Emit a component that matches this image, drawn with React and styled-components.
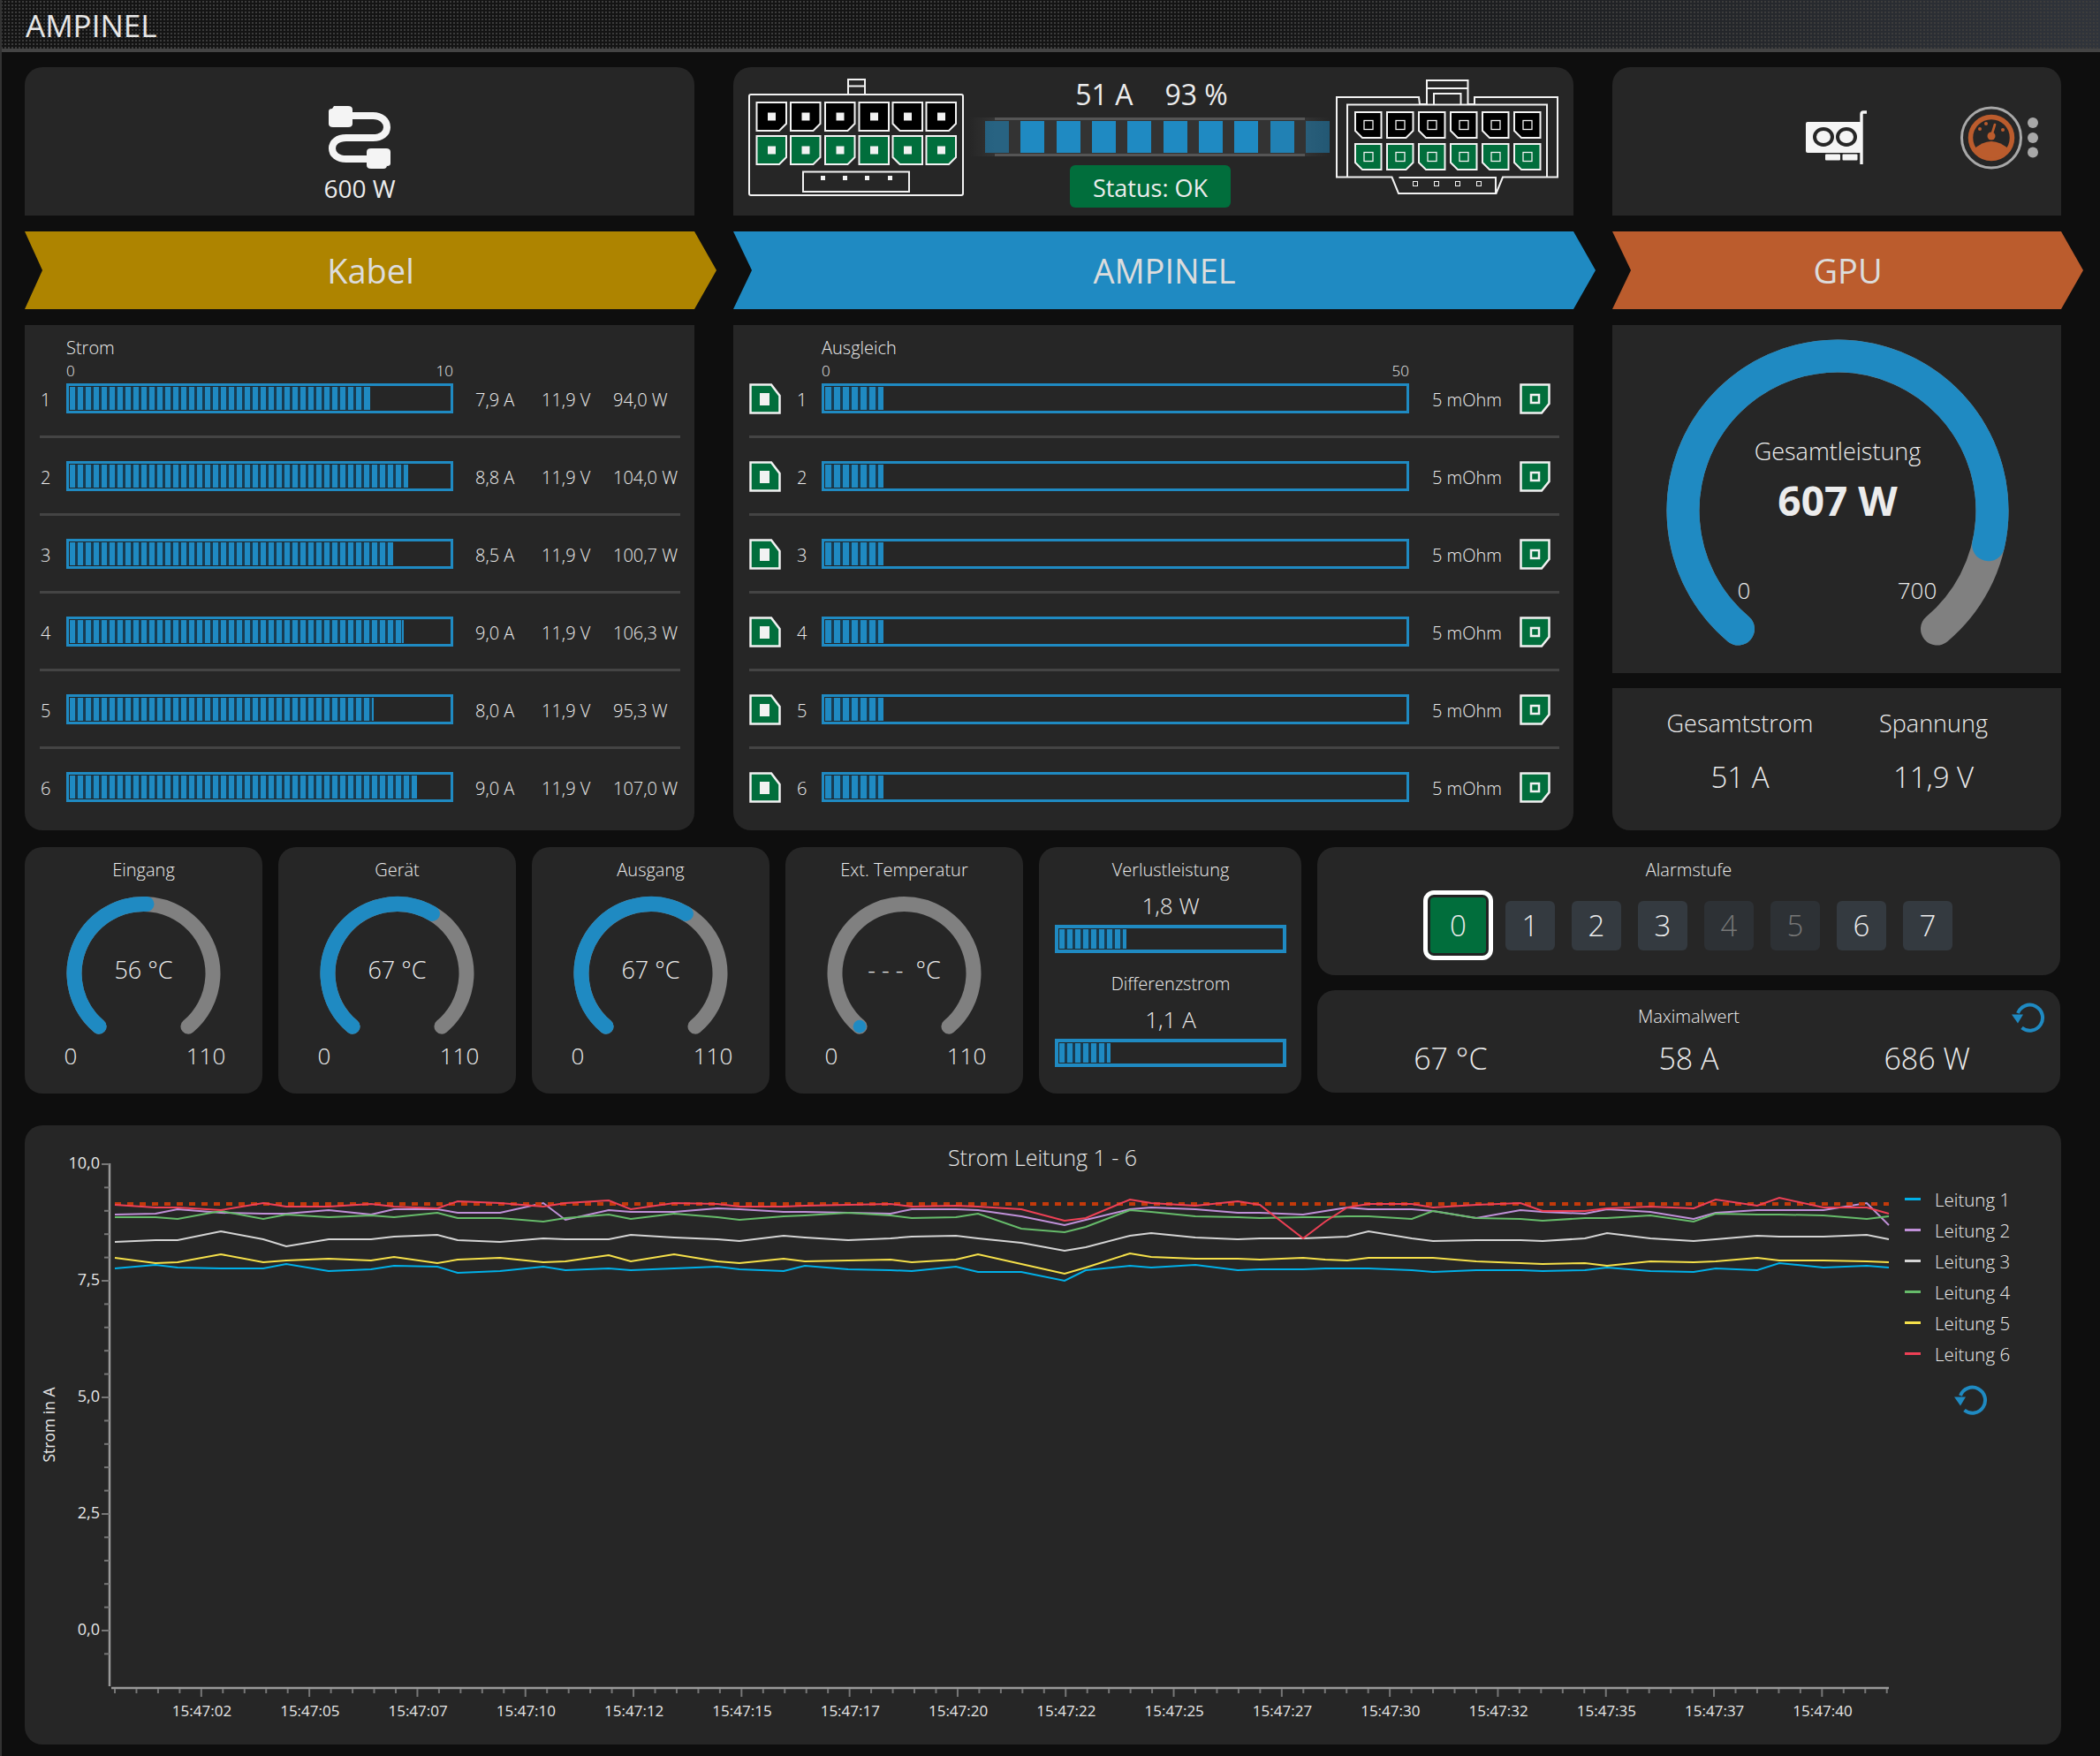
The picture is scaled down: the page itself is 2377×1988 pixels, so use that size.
import React from "react";
import styled, { createGlobalStyle } from "styled-components";

const BLUE = "#1f8ac2";
const GREEN = "#016e3c";
const TRACK = "#808080";

const GlobalStyle = createGlobalStyle`
  html, body {
    margin: 0;
    padding: 0;
    background: #0e0e0e;
    color: #ececec;
    font-family: "Open Sans", "Liberation Sans", sans-serif;
    font-weight: 300;
  }
`;

const Page = styled.div`
  width: 2377px;
  height: 1988px;
  box-sizing: border-box;
  border-left: 2px solid #333;
  overflow: hidden;
`;

const TitleBar = styled.header`
  height: 55px;
  box-sizing: content-box;
  margin-left: -2px;
  padding-left: 29px;
  display: flex;
  align-items: center;
  font-size: 35px;
  line-height: 60px;
  font-weight: 400;
  color: #e6e6e6;
  border-bottom: 4px solid #444;
  background:
    radial-gradient(circle, #3c3c3c 1px, transparent 1.4px) 0 0 / 4px 4px,
    linear-gradient(90deg, #141414 0%, #141414 58%, #30343b 100%);
  span { padding-top: 3px; }
`;

const Main = styled.main`
  padding: 17px 0 0 26px;
`;

const TopGrid = styled.div`
  display: grid;
  grid-template-columns: 758px 951px 508px;
  grid-template-rows: 168px 88px 572px;
  column-gap: 44px;
  row-gap: 18px;
`;

const Panel = styled.section`
  background: #262626;
  box-sizing: border-box;
  border-radius: ${(p) => p.$radius || "0"};
`;

const CableCard = styled(Panel)`
  display: flex;
  flex-direction: column;
  align-items: center;
  padding-top: 44px;
  font-size: 28px;
  font-weight: 400;
  line-height: 38px;
  svg { margin-bottom: 3px; }
`;

const ConnectorCard = styled(Panel)`
  display: flex;
  padding-left: 10px;
  gap: 1px;
  svg { flex: none; }
`;

const FlowColumn = styled.div`
  width: 408px;
  display: flex;
  flex-direction: column;
  align-items: center;
`;

const Readout = styled.div`
  height: 57px;
  padding: 3px 0 0 5px;
  box-sizing: border-box;
  display: flex;
  gap: 36px;
  align-items: center;
  font-size: 32px;
  font-weight: 400;
`;

const FlowTrack = styled.div`
  position: relative;
  width: 408px;
  height: 44px;
  box-sizing: border-box;
  padding-left: 18px;
  display: flex;
  align-items: center;
  gap: 13.4px;
  background: linear-gradient(90deg, transparent 0, #333 7%, #333 93%, transparent 100%);
  &::before {
    content: "";
    position: absolute;
    left: 29px;
    width: 351px;
    top: 0;
    bottom: 0;
    border-top: 3px solid #555;
    border-bottom: 3px solid #555;
  }
`;

const FlowBlock = styled.div`
  width: 27px;
  height: 36px;
  background: ${BLUE};
  opacity: ${(p) => p.$dim};
`;

const StatusBadge = styled.div`
  margin: 10px 0 0 2px;
  width: 182px;
  height: 48px;
  box-sizing: border-box;
  padding-top: 3px;
  border-radius: 6px;
  background: ${GREEN};
  display: flex;
  align-items: center;
  justify-content: center;
  font-size: 27px;
  font-weight: 400;
`;

const GpuCard = styled(Panel)`
  display: flex;
  align-items: center;
  padding: 0 0 9px 219px;
  svg:last-child { margin-left: 105px; }
`;

const Banner = styled.div`
  width: calc(100% + 25px);
  background: ${(p) => p.$color};
  display: flex;
  align-items: center;
  justify-content: center;
  font-size: 38px;
  font-weight: 400;
  color: #dcdcdc;
  clip-path: polygon(
    0 0,
    calc(100% - 25px) 0,
    100% 50%,
    calc(100% - 25px) 100%,
    0 100%,
    ${(p) => p.$notch}px 50%
  );
`;

const RowsPanel = styled(Panel)`
  padding: 14px 16px 0 ${(p) => p.$left}px;
`;

const RowsTitle = styled.div`
  margin-left: ${(p) => p.$indent}px;
  font-size: 20px;
  line-height: 24px;
`;

const ScaleHead = styled.div`
  margin: 4px 0 4px ${(p) => p.$indent}px;
  width: ${(p) => p.$width}px;
  display: flex;
  justify-content: space-between;
  font-size: 17px;
  line-height: 20px;
`;

const Row = styled.div`
  display: flex;
  align-items: center;
  height: 34px;
  font-size: 20px;
  padding-bottom: 25px;
  margin-bottom: 26px;
  border-bottom: 3px solid #444;
  &:last-child { border-bottom: 0; }
`;

const RowNumber = styled.div`
  flex: none;
  width: ${(p) => p.$width}px;
  padding: 2px 0 0 ${(p) => p.$pad}px;
  box-sizing: border-box;
`;

const Value = styled.div`
  flex: none;
  width: ${(p) => p.$width}px;
  margin-left: ${(p) => p.$gap || 0}px;
  padding-top: 2px;
  white-space: nowrap;
`;

const Bar = styled.div`
  flex: none;
  box-sizing: border-box;
  width: ${(p) => p.$width}px;
  height: ${(p) => p.$height || 34}px;
  border: ${(p) => p.$border || 3}px solid ${BLUE};
  padding: 1px;
`;

const BarFill = styled.div`
  height: 100%;
  width: ${(p) => p.$fill * 100}%;
  box-sizing: border-box;
  border-right: 2px solid ${BLUE};
  background: repeating-linear-gradient(
    90deg,
    ${BLUE} 0,
    ${BLUE} ${(p) => p.$pitch - 3}px,
    #183c52 ${(p) => p.$pitch - 3}px,
    #183c52 ${(p) => p.$pitch}px
  );
`;

const GpuColumn = styled.div`
  display: flex;
  flex-direction: column;
  gap: 17px;
`;

const PowerGaugePanel = styled(Panel)`
  position: relative;
  height: 394px;
  svg { display: block; }
`;

const GaugeLabel = styled.div`
  position: absolute;
  left: ${(p) => p.$x}px;
  top: ${(p) => p.$y}px;
  transform: translate(-50%, -50%);
  white-space: nowrap;
  font-size: ${(p) => p.$size}px;
  font-weight: ${(p) => p.$weight || 300};
`;

const TotalsPanel = styled(Panel)`
  height: 161px;
  display: grid;
  grid-template-columns: 72px 145px 74px 145px;
  align-content: start;
  padding-top: 22px;
  text-align: center;
`;

const TotalCol = styled.div`
  grid-column: ${(p) => p.$col};
  justify-self: center;
  white-space: nowrap;
  font-size: 27px;
  line-height: 36px;
  div { margin-top: 25px; font-size: 33px; }
`;

const SecondRow = styled.div`
  margin-top: 19px;
  display: flex;
  gap: 18px;
  height: 279px;
`;

const TempCard = styled(Panel)`
  width: 269px;
  padding-top: 12px;
  border-radius: 20px;
  flex: none;
`;

const CardTitle = styled.div`
  text-align: center;
  font-size: 20px;
  line-height: 28px;
`;

const GaugeBox = styled.div`
  position: relative;
  height: 239px;
  svg { display: block; }
`;

const PowerCard = styled(Panel)`
  width: 297px;
  flex: none;
  border-radius: 20px;
  padding: 12px 17px 0 18px;
`;

const PowerValue = styled.div`
  text-align: center;
  font-size: 26px;
  line-height: 36px;
  margin: 8px 0 4px;
`;

const PowerGap = styled.div`
  height: 21px;
`;

const RightColumn = styled.div`
  width: 841px;
  display: flex;
  flex-direction: column;
  gap: 17px;
`;

const AlarmCard = styled(Panel)`
  height: 145px;
  border-radius: 20px;
  padding-top: 12px;
`;

const AlarmRow = styled.div`
  margin-top: 9px;
  display: flex;
  justify-content: center;
  align-items: center;
  gap: 19px;
  padding-right: 2px;
`;

const AlarmButton = styled.div`
  box-sizing: border-box;
  display: flex;
  align-items: center;
  justify-content: center;
  font-size: 33px;
  border-radius: ${(p) => (p.$active ? 12 : 6)}px;
  width: ${(p) => (p.$active ? 79 : 56)}px;
  height: ${(p) => (p.$active ? 79 : 56)}px;
  margin-right: ${(p) => (p.$active ? -5 : 0)}px;
  color: ${(p) => (p.$off ? "#777" : "#ececec")};
  background: ${(p) => (p.$active ? GREEN : p.$off ? "#2d3135" : "#343a40")};
  border: ${(p) => (p.$active ? "5px solid #fff" : "0")};
  box-shadow: ${(p) => (p.$active ? "inset 0 0 0 3px #222" : "none")};
`;

const MaxCard = styled(Panel)`
  position: relative;
  height: 116px;
  border-radius: 20px;
  padding-top: 16px;
`;

const MaxValues = styled.div`
  margin-top: 11px;
  display: grid;
  grid-template-columns: 1fr 1fr 1fr;
  padding: 0 16px;
  text-align: center;
  font-size: 34px;
  line-height: 44px;
`;

const ResetCorner = styled.div`
  position: absolute;
  right: 17px;
  top: 12px;
`;

const ChartCard = styled(Panel)`
  margin-top: 36px;
  width: 2305px;
  height: 701px;
  border-radius: 20px;
  display: flex;
  svg { flex: none; }
`;

const Legend = styled.div`
  padding: 66px 0 0 3px;
  font-size: 20.5px;
  flex: 1;
`;

const LegendItem = styled.div`
  display: flex;
  align-items: center;
  height: 35px;
  gap: 16px;
  &::before {
    content: "";
    width: 18px;
    height: 3px;
    background: ${(p) => p.$color};
  }
`;

const LegendReset = styled.div`
  margin: 16px 0 0 56px;
`;

const ChartText = styled.text`
  fill: #e6e6e6;
  font-size: ${(p) => p.$size}px;
  font-weight: ${(p) => p.$weight || 300};
`;

// geometry helpers for the gauges
const polar = (cx, cy, r, deg) => {
  const a = (deg * Math.PI) / 180;
  return [cx + r * Math.cos(a), cy + r * Math.sin(a)];
};

const arcPath = (cx, cy, r, from, to) => {
  const [x1, y1] = polar(cx, cy, r, from);
  const [x2, y2] = polar(cx, cy, r, to);
  const large = to - from > 180 ? 1 : 0;
  return `M ${x1} ${y1} A ${r} ${r} 0 ${large} 1 ${x2} ${y2}`;
};

const Gauge = ({ width, height, cx, cy, r, stroke, value }) => {
  const end = 130 + 280 * value;
  return (
    <svg width={width} height={height}>
      <path d={arcPath(cx, cy, r, 130, 410)} fill="none" stroke={TRACK} strokeWidth={stroke} strokeLinecap="round" />
      {value > 0 ? (
        <path d={arcPath(cx, cy, r, 130, end)} fill="none" stroke={BLUE} strokeWidth={stroke} strokeLinecap="round" />
      ) : (
        <circle cx={polar(cx, cy, r, 130)[0]} cy={polar(cx, cy, r, 130)[1]} r={stroke / 2.3} fill={BLUE} />
      )}
    </svg>
  );
};

const pinPoints = (x, y, w, h, cut) => {
  const c = 8;
  if (cut === "br") return `${x},${y} ${x + w},${y} ${x + w},${y + h - c} ${x + w - c},${y + h} ${x},${y + h}`;
  if (cut === "bl") return `${x},${y} ${x + w},${y} ${x + w},${y + h} ${x + c},${y + h} ${x},${y + h - c}`;
  return `${x},${y} ${x + w},${y} ${x + w},${y + h} ${x},${y + h}`;
};

const LEFT_PIN_X = [16.5, 55, 94, 132.5, 170.5, 208.5];
const LEFT_CUTS = ["br", "br", "br", "", "bl", "br"];
const RIGHT_PIN_X = [33, 69, 105, 141, 177, 213];
const RIGHT_CUTS = ["bl", "br", "bl", "bl", "bl", "bl"];

const LeftConnector = () => (
  <svg width="256" height="160" viewBox="0 6 256 160" fill="none" stroke="#f2f2f2" strokeWidth="2">
    <path d="M120 37 V20 H139 V37 M120 27.5 H139" />
    <rect x="8" y="37" width="242" height="114" rx="2" />
    {[46, 84].map((y, row) =>
      LEFT_PIN_X.map((x, i) => (
        <g key={`${row}-${i}`}>
          <polygon points={pinPoints(x, y, 33.5, 32, LEFT_CUTS[i])} fill={row ? GREEN : "#000"} />
          <rect x={x + 12.5} y={y + 11.5} width="9" height="9" fill="#f2f2f2" stroke="none" />
        </g>
      ))
    )}
    <rect x="69" y="124.5" width="120" height="22.5" />
    {[91.5, 116.5, 141.5, 167.5].map((x) => (
      <rect key={x} x={x - 2.5} y="129" width="5" height="5" fill="#f2f2f2" stroke="none" />
    ))}
  </svg>
);

const RightConnector = () => (
  <svg width="270" height="160" viewBox="5 6 270 160" fill="none" stroke="#f2f2f2" strokeWidth="2">
    <path d="M12 40 H105 L106 48 H114 V21 H160.5 V48 H168 V40 H262 V130.5 H200 L192.5 149 H82 L74.5 130.5 H12 Z" />
    <path d="M114 30 H160.5 M122 48 V36 H152.5 V48" />
    <path d="M24 130.5 V48.5 H250 V130.5" />
    <path d="M82.5 131 H192 V149" />
    {[57, 93].map((y, row) =>
      RIGHT_PIN_X.map((x, i) => (
        <g key={`${row}-${i}`}>
          <polygon points={pinPoints(x, y, 29.5, 29, RIGHT_CUTS[i])} fill={row ? GREEN : "#000"} />
          <rect x={x + 10} y={y + 9.5} width="10" height="10" strokeWidth="1.3" />
        </g>
      ))
    )}
    {[101, 125, 149, 173].map((x) => (
      <rect key={x} x={x - 2.5} y="135.5" width="5" height="5" strokeWidth="1" />
    ))}
  </svg>
);

const CableIcon = () => (
  <svg width="70" height="71" viewBox="0 0 70 71">
    <path d="M26 11 H50 C60 11 66 17 66 24 C66 31 60 36 50 36 H20 C10 36 4 41 4 48 C4 55 10 60 20 60 H46" fill="none" stroke="#f4f4f4" strokeWidth="8" />
    <path d="M6 0 H22 Q27 0 27 4 V20 Q27 24 22 24 H5 Q0 24 0 20 V6 Q0 3 4 3 Z" fill="#f4f4f4" />
    <path d="M48 48 H65 Q70 48 70 52 V65 Q70 68 66 68 V67 Q66 71 62 71 H48 Q43 71 43 67 V52 Q43 48 48 48 Z" fill="#f4f4f4" />
  </svg>
);

const GpuIcon = () => (
  <svg width="70" height="62" viewBox="0 0 70 62">
    <rect x="0" y="13" width="63" height="35" rx="2" fill="#f5f5f5" />
    <ellipse cx="20" cy="30" rx="10" ry="9" fill="#f5f5f5" stroke="#262626" strokeWidth="4" />
    <ellipse cx="46" cy="30" rx="10" ry="9" fill="#f5f5f5" stroke="#262626" strokeWidth="4" />
    <rect x="22" y="49.5" width="17" height="7" rx="1" fill="#f5f5f5" />
    <rect x="41.5" y="49.5" width="17" height="7" rx="1" fill="#f5f5f5" />
    <path d="M63 61 V4 Q63 2 65 2 H69" fill="none" stroke="#f5f5f5" strokeWidth="3.4" />
  </svg>
);

const SpeedIcon = () => (
  <svg width="90" height="72" viewBox="0 0 90 72">
    <ellipse cx="35" cy="36" rx="33.5" ry="34" fill="none" stroke="#a8a8a8" strokeWidth="3" />
    <circle cx="35" cy="36" r="23.5" fill="#262626" stroke="#bb5c2d" strokeWidth="5.5" />
    <path d="M14 50 Q35 30 56 50 Q48 59 35 59 Q22 59 14 50 Z" fill="#bb5c2d" />
    <circle cx="35" cy="34" r="4.5" fill="#bb5c2d" />
    <path d="M35 34 L39 21" stroke="#bb5c2d" strokeWidth="2.6" strokeLinecap="round" />
    <circle cx="22" cy="26" r="2" fill="#bb5c2d" />
    <circle cx="29" cy="20" r="2" fill="#bb5c2d" />
    <circle cx="48" cy="27" r="2" fill="#bb5c2d" />
    <circle cx="82" cy="19" r="6" fill="#a8a8a8" />
    <circle cx="82" cy="36" r="6" fill="#a8a8a8" />
    <circle cx="82" cy="52.5" r="6" fill="#a8a8a8" />
  </svg>
);

const ChipIn = () => (
  <svg width="36" height="35" viewBox="0 0 36 35">
    <polygon points="1.5,1.5 25,1.5 34.5,14 34.5,33.5 1.5,33.5" fill={GREEN} stroke="#f2f2f2" strokeWidth="2.5" />
    <rect x="12" y="11" width="11" height="14" fill="#f2f2f2" />
  </svg>
);

const ChipOut = () => (
  <svg width="35" height="35" viewBox="0 0 35 35">
    <polygon points="1.5,1.5 33.5,1.5 33.5,23 25,33.5 1.5,33.5" fill={GREEN} stroke="#f2f2f2" strokeWidth="2.5" />
    <rect x="13" y="13" width="9" height="9" fill="none" stroke="#f2f2f2" strokeWidth="2.5" />
  </svg>
);

const ResetIcon = () => (
  <svg width="38" height="38" viewBox="0 0 38 38">
    <path d="M7 14 A 14.5 14.5 0 1 1 11.5 30.5" fill="none" stroke={BLUE} strokeWidth="4" />
    <polygon points="0,15.5 13,15.5 7,25.5" fill={BLUE} />
  </svg>
);

const KABEL_ROWS = [
  ["7,9 A", "11,9 V", "94,0 W", 0.79],
  ["8,8 A", "11,9 V", "104,0 W", 0.89],
  ["8,5 A", "11,9 V", "100,7 W", 0.85],
  ["9,0 A", "11,9 V", "106,3 W", 0.88],
  ["8,0 A", "11,9 V", "95,3 W", 0.8],
  ["9,0 A", "11,9 V", "107,0 W", 0.915],
];

const TEMPS = [
  { title: "Eingang", text: "56 °C", value: 56 / 110 },
  { title: "Gerät", text: "67 °C", value: 67 / 110 },
  { title: "Ausgang", text: "67 °C", value: 67 / 110 },
  { title: "Ext. Temperatur", text: "-\u00a0-\u00a0-\u00a0 °C", value: 0 },
];

const ALARMS = [0, 1, 2, 3, 4, 5, 6, 7];

// chart samples, x in page pixels and y in page pixels of the reference plot
const XS = [130,176,201,250,298,324,372,420,446,495,518,566,615,640,689,714,763,812,837,887,911,960,1008,1032,1082,1107,1156,1205,1229,1279,1303,1353,1401,1426,1475,1500,1525,1549,1598,1622,1671,1721,1746,1794,1819,1868,1917,1942,1989,2014,2064,2113,2138];

const SERIES = [
  { name: "Leitung 1", color: "#00b0e8", ys: [1436,1432,1435,1436,1436,1431,1439,1437,1433,1434,1441,1439,1434,1438,1436,1438,1436,1434,1437,1439,1433,1437,1438,1439,1434,1440,1440,1450,1438,1433,1435,1432,1438,1437,1437,1436,1436,1436,1438,1440,1438,1438,1439,1438,1435,1439,1440,1436,1438,1430,1435,1433,1435] },
  { name: "Leitung 2", color: "#c090d8", ys: [1375,1374,1369,1373,1374,1374,1370,1375,1369,1369,1373,1373,1362,1381,1370,1372,1372,1368,1369,1372,1372,1373,1374,1369,1369,1370,1377,1387,1381,1369,1367,1369,1373,1373,1375,1371,1367,1369,1369,1371,1379,1370,1372,1374,1369,1372,1380,1373,1370,1370,1370,1362,1387] },
  { name: "Leitung 3", color: "#d4d4d4", ys: [1406,1404,1404,1394,1403,1411,1403,1403,1400,1398,1404,1406,1402,1403,1403,1398,1401,1403,1405,1399,1401,1404,1402,1400,1399,1402,1407,1416,1412,1399,1396,1401,1403,1402,1402,1401,1400,1394,1402,1405,1404,1404,1405,1402,1396,1402,1405,1403,1399,1400,1400,1398,1403] },
  { name: "Leitung 4", color: "#66bb6a", ys: [1378,1378,1380,1371,1380,1375,1378,1376,1378,1373,1379,1379,1383,1379,1375,1380,1374,1378,1381,1377,1376,1373,1376,1379,1378,1374,1391,1395,1389,1370,1372,1377,1378,1379,1378,1378,1377,1377,1380,1371,1379,1380,1382,1379,1379,1376,1383,1374,1375,1375,1376,1380,1377] },
  { name: "Leitung 5", color: "#f5e04a", ys: [1424,1430,1429,1420,1429,1427,1425,1427,1423,1430,1426,1424,1429,1428,1421,1428,1420,1428,1430,1425,1428,1427,1426,1429,1426,1420,1431,1442,1435,1419,1423,1425,1425,1426,1424,1426,1427,1424,1424,1424,1428,1430,1431,1430,1433,1428,1429,1428,1424,1427,1427,1428,1429] },
  { name: "Leitung 6", color: "#ee4055", ys: [1364,1367,1367,1370,1362,1366,1366,1363,1366,1368,1360,1362,1366,1362,1359,1369,1362,1363,1366,1366,1365,1364,1363,1366,1365,1366,1369,1382,1379,1358,1362,1365,1360,1364,1402,1383,1367,1363,1363,1367,1364,1362,1371,1371,1368,1366,1368,1358,1365,1356,1367,1367,1374] },
];

const Y_LABELS = [["10,0", 1318], ["7,5", 1450], ["5,0", 1582], ["2,5", 1714], ["0,0", 1846]];
const TIMES = ["02","05","07","10","12","15","17","20","22","25","27","30","32","35","37","40"];
const X_TICKS = Array.from({ length: 83 }, (_, i) => i);
const Y_TICKS = Array.from({ length: 22 }, (_, i) => i);

const pointsOf = (ys) => ys.map((y, i) => `${XS[i]},${y}`).join(" ");

const CurrentChart = () => (
  <svg width="2125" height="701" viewBox="28 1274 2125 701">
    <ChartText x="1180" y="1320" textAnchor="middle" $size={25}>Strom Leitung 1 - 6</ChartText>
    <ChartText transform="translate(62 1613) rotate(-90)" textAnchor="middle" $size={17.5} $weight={400}>Strom in A</ChartText>
    <path d="M124 1317 V1909" stroke="#999" strokeWidth="2.5" />
    <path d="M126 1911 H2138" stroke="#999" strokeWidth="2.5" />
    {Y_TICKS.map((i) => {
      const y = 1318 + i * 26.4;
      return <path key={i} d={`M${i % 5 === 0 ? 115 : 118} ${y} H124`} stroke="#777" strokeWidth="2" />;
    })}
    {Y_LABELS.map(([text, y]) => (
      <ChartText key={text} x="113" y={y + 5} textAnchor="end" $size={18} $weight={400}>{text}</ChartText>
    ))}
    {X_TICKS.map((i) => {
      const x = 130 + i * 24.46;
      return <path key={i} d={`M${x} 1912 V${(i + 1) % 5 === 0 ? 1921 : 1917}`} stroke="#777" strokeWidth="2" />;
    })}
    {TIMES.map((t, i) => (
      <ChartText key={t} x={228.5 + i * 122.3} y="1943" textAnchor="middle" $size={17} $weight={400}>{`15:47:${t}`}</ChartText>
    ))}
    {SERIES.slice(0, 5).map((s) => (
      <polyline key={s.name} points={pointsOf(s.ys)} fill="none" stroke={s.color} strokeWidth="2" />
    ))}
    <path d="M130 1363 H2138" stroke="#c43a0a" strokeWidth="4" strokeDasharray="7 7" />
    <polyline points={pointsOf(SERIES[5].ys)} fill="none" stroke={SERIES[5].color} strokeWidth="2" />
  </svg>
);

const App = () => (
  <Page>
    <GlobalStyle />
    <TitleBar><span>AMPINEL</span></TitleBar>
    <Main>
      <TopGrid>
        <CableCard $radius="20px 20px 0 0">
          <CableIcon />
          600 W
        </CableCard>
        <ConnectorCard $radius="20px 20px 0 0">
          <LeftConnector />
          <FlowColumn>
            <Readout>
              <span>51 A</span>
              <span>93 %</span>
            </Readout>
            <FlowTrack>
              {[0.55, 1, 1, 1, 1, 1, 1, 1, 0.9, 0.5].map((dim, i) => (
                <FlowBlock key={i} $dim={dim} />
              ))}
            </FlowTrack>
            <StatusBadge>Status: OK</StatusBadge>
          </FlowColumn>
          <RightConnector />
        </ConnectorCard>
        <GpuCard $radius="20px 20px 0 0">
          <GpuIcon />
          <SpeedIcon />
        </GpuCard>

        <Banner $color="#ae8400" $notch={20}>Kabel</Banner>
        <Banner $color={BLUE} $notch={21}>AMPINEL</Banner>
        <Banner $color="#bb5c2d" $notch={21}>GPU</Banner>

        <RowsPanel $radius="0 0 20px 20px" $left={17}>
          <RowsTitle $indent={30}>Strom</RowsTitle>
          <ScaleHead $indent={30} $width={438}>
            <span>0</span>
            <span>10</span>
          </ScaleHead>
          {KABEL_ROWS.map(([a, v, w, fill], i) => (
            <Row key={i}>
              <RowNumber $width={30} $pad={1}>{i + 1}</RowNumber>
              <Bar $width={438}>
                <BarFill $fill={fill} $pitch={9} />
              </Bar>
              <Value $gap={25} $width={75}>{a}</Value>
              <Value $width={81}>{v}</Value>
              <Value $width={80}>{w}</Value>
            </Row>
          ))}
        </RowsPanel>

        <RowsPanel $radius="0 0 20px 20px" $left={18}>
          <RowsTitle $indent={82}>Ausgleich</RowsTitle>
          <ScaleHead $indent={82} $width={665}>
            <span>0</span>
            <span>50</span>
          </ScaleHead>
          {[1, 2, 3, 4, 5, 6].map((n) => (
            <Row key={n}>
              <ChipIn />
              <RowNumber $width={46} $pad={18}>{n}</RowNumber>
              <Bar $width={665}>
                <BarFill $fill={0.1} $pitch={10} />
              </Bar>
              <Value $gap={26} $width={99}>5 mOhm</Value>
              <ChipOut />
            </Row>
          ))}
        </RowsPanel>

        <GpuColumn>
          <PowerGaugePanel>
            <Gauge width={508} height={393} cx={255} cy={210} r={175} stroke={37} value={607 / 700} />
            <GaugeLabel $x={255} $y={142} $size={27}>Gesamtleistung</GaugeLabel>
            <GaugeLabel $x={255} $y={198} $size={46} $weight={700}>607 W</GaugeLabel>
            <GaugeLabel $x={149} $y={300} $size={26}>0</GaugeLabel>
            <GaugeLabel $x={345} $y={300} $size={26}>700</GaugeLabel>
          </PowerGaugePanel>
          <TotalsPanel $radius="0 0 20px 20px">
            <TotalCol $col={2}>Gesamtstrom<div>51 A</div></TotalCol>
            <TotalCol $col={4}>Spannung<div>11,9 V</div></TotalCol>
          </TotalsPanel>
        </GpuColumn>
      </TopGrid>

      <SecondRow>
        {TEMPS.map((t) => (
          <TempCard key={t.title}>
            <CardTitle>{t.title}</CardTitle>
            <GaugeBox>
              <Gauge width={269} height={239} cx={134.5} cy={103} r={78.5} stroke={17} value={t.value} />
              <GaugeLabel $x={134.5} $y={98} $size={27}>{t.text}</GaugeLabel>
              <GaugeLabel $x={52} $y={196} $size={26}>0</GaugeLabel>
              <GaugeLabel $x={205} $y={196} $size={26}>110</GaugeLabel>
            </GaugeBox>
          </TempCard>
        ))}
        <PowerCard>
          <CardTitle>Verlustleistung</CardTitle>
          <PowerValue>1,8 W</PowerValue>
          <Bar $width={262} $height={32} $border={4}>
            <BarFill $fill={0.3} $pitch={9} />
          </Bar>
          <PowerGap />
          <CardTitle>Differenzstrom</CardTitle>
          <PowerValue>1,1 A</PowerValue>
          <Bar $width={262} $height={32} $border={4}>
            <BarFill $fill={0.23} $pitch={9} />
          </Bar>
        </PowerCard>
        <RightColumn>
          <AlarmCard>
            <CardTitle>Alarmstufe</CardTitle>
            <AlarmRow>
              {ALARMS.map((n) => (
                <AlarmButton key={n} $active={n === 0} $off={n === 4 || n === 5}>{n}</AlarmButton>
              ))}
            </AlarmRow>
          </AlarmCard>
          <MaxCard>
            <CardTitle>Maximalwert</CardTitle>
            <MaxValues>
              <span>67 °C</span>
              <span>58 A</span>
              <span>686 W</span>
            </MaxValues>
            <ResetCorner><ResetIcon /></ResetCorner>
          </MaxCard>
        </RightColumn>
      </SecondRow>

      <ChartCard>
        <CurrentChart />
        <Legend>
          {SERIES.map((s) => (
            <LegendItem key={s.name} $color={s.color}>{s.name}</LegendItem>
          ))}
          <LegendReset><ResetIcon /></LegendReset>
        </Legend>
      </ChartCard>
    </Main>
  </Page>
);

export default App;
